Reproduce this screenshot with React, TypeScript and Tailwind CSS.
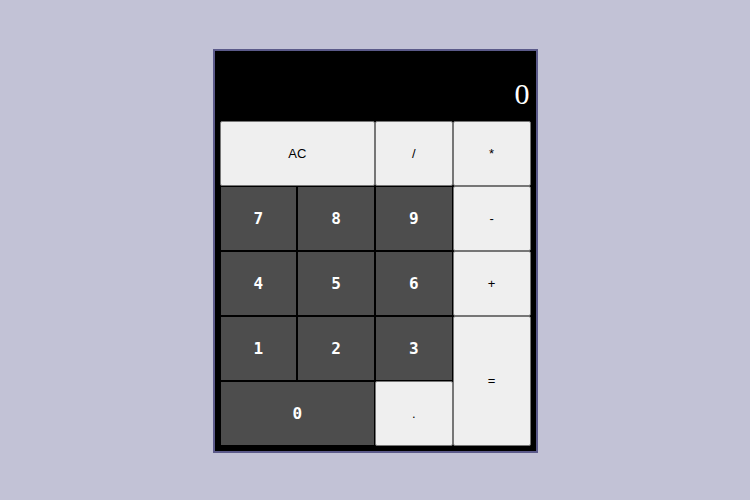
import React from "react";

const light =
  "bg-[#efefef] border border-[#767676] rounded-[2px] text-black text-[13px] font-['Liberation_Sans',Arial,sans-serif] flex items-center justify-center";
const dark =
  "bg-[#4d4d4d] border border-black text-white text-[16px] font-bold font-['DejaVu_Sans_Mono',monospace] flex items-center justify-center";

export default function App() {
  return (
    <div className="w-[750px] h-[500px] bg-[#c2c2d6] flex justify-center pt-[49px]">
      <div className="w-[325px] h-[404px] border-2 border-[#5b5a8a] bg-black px-[5px] pb-[4px] flex flex-col">
        <div className="h-[70px] flex items-end justify-end pr-[1px] pb-[12px] text-white text-[30px] leading-none font-['Liberation_Serif','Times_New_Roman',serif]">
          0
        </div>
        <div className="grid grid-cols-4 grid-rows-[repeat(5,65px)] w-[311px]">
          <button className={`${light} col-span-2`}>AC</button>
          <button className={light}>/</button>
          <button className={light}>*</button>
          <button className={dark}>7</button>
          <button className={dark}>8</button>
          <button className={dark}>9</button>
          <button className={light}>-</button>
          <button className={dark}>4</button>
          <button className={dark}>5</button>
          <button className={dark}>6</button>
          <button className={light}>+</button>
          <button className={dark}>1</button>
          <button className={dark}>2</button>
          <button className={dark}>3</button>
          <button className={`${light} row-span-2`}>=</button>
          <button className={`${dark} col-span-2`}>0</button>
          <button className={light}>.</button>
        </div>
      </div>
    </div>
  );
}
